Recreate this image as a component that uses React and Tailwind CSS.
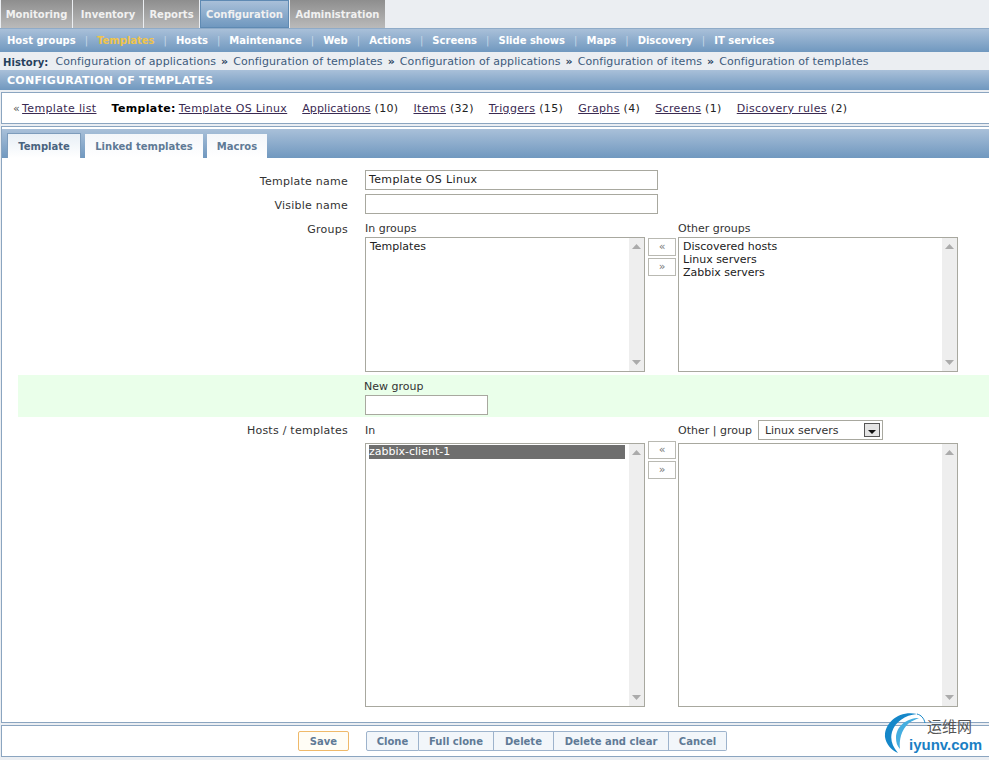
const mainTabs = [
  { label: "Monitoring", w: "w-[71px]" },
  { label: "Inventory", w: "w-[70px]" },
  { label: "Reports", w: "w-[55px]" },
  { label: "Configuration", w: "w-[89px]", active: true },
  { label: "Administration", w: "w-[95px]" },
]

const subLinks = ["Host groups", "Templates", "Hosts", "Maintenance", "Web", "Actions", "Screens", "Slide shows", "Maps", "Discovery", "IT services"]
const history = ["Configuration of applications", "Configuration of templates", "Configuration of applications", "Configuration of items", "Configuration of templates"]
const crumbs = [
  ["Applications", "(10)", "tracking-[0.1px]"],
  ["Items", "(32)", ""],
  ["Triggers", "(15)", ""],
  ["Graphs", "(4)", ""],
  ["Screens", "(1)", ""],
  ["Discovery rules", "(2)", ""],
]

const barGradient = "bg-gradient-to-b from-[#a9c0d9] to-[#7098bf]"

function Arrow({ down }) {
  return (
    <svg width="9" height="5" viewBox="0 0 9 5" className="block">
      <path d={down ? "M0 0h9L4.5 5z" : "M4.5 0L9 5H0z"} fill="#ababab" />
    </svg>
  )
}

function ListBox({ width, height, items = [], selected }) {
  return (
    <div className={`${width} ${height} border border-[#a8a89f] bg-white flex`}>
      <div className="flex-1 text-[11px] leading-[13px] text-[#222]">
        {items.length > 0 && (
          <div className="pl-[4px] pt-[2px]">
            {items.map((item) => (
              <div key={item}>{item}</div>
            ))}
          </div>
        )}
        {selected && <div className="mt-[1px] ml-[3px] mr-[4px] h-[14px] bg-[#6e6e6e] text-white">{selected}</div>}
      </div>
      <div className="w-[15px] bg-[#eeeeee] flex flex-col justify-between items-center py-[6px]">
        <Arrow />
        <Arrow down />
      </div>
    </div>
  )
}

function MoveButtons() {
  return (
    <div className="w-[28px] flex flex-col gap-[2px] text-[11px] text-[#777]">
      <div className="h-[18px] border border-[#b9b9b2] bg-white flex items-center justify-center">«</div>
      <div className="h-[18px] border border-[#b9b9b2] bg-white flex items-center justify-center">»</div>
    </div>
  )
}

function Row({ label, children, className = "" }) {
  return (
    <div className={`flex ${className}`}>
      <div className="w-[348px] shrink-0 text-right text-[11px] leading-[14px] tracking-[0.25px] text-[#333]">{label}</div>
      <div className="ml-[17px]">{children}</div>
    </div>
  )
}

function FootButton({ label, className = "" }) {
  return (
    <div className={`h-[20px] flex items-center justify-center bg-[#f2f6fa] border border-[#9db3cc] text-[10px] font-bold text-[#5f7a96] ${className}`}>
      {label}
    </div>
  )
}

function Logo() {
  return (
    <div className="absolute left-[884px] top-[710px] w-[105px] h-[50px]">
      <svg width="44" height="44" viewBox="0 0 44 44" className="absolute left-0 top-[2px]">
        <path d="M33 2C15-2 0 11 1 25c1 7 6 13 13 16C8 34 6 27 8 20 11 10 21 3 33 2z" fill="#1587c9" />
        <path d="M35 6C23 6 12 14 12 26c0 4 1 8 4 11-1-9 1-19 9-26 3-2 7-4 10-5z" fill="#45aee0" />
        <path d="M33 2c4 1 7 4 8 9" fill="none" stroke="#1587c9" strokeWidth="1" />
      </svg>
      <div className="absolute left-[43px] top-[7px] text-[15px] leading-[18px] text-[#555] font-['Noto_Sans_CJK_SC',sans-serif]">运维网</div>
      <div className="absolute left-[25px] top-[26px] text-[15px] leading-[18px] font-bold text-[#1a7fc4] font-['Liberation_Sans',sans-serif]">iyunv.com</div>
    </div>
  )
}

export default function App() {
  return (
    <div className="relative w-[989px] h-[760px] overflow-hidden bg-[#ebeef2] font-['DejaVu_Sans',sans-serif]">
      {/* Main menu */}
      <div className="h-[28px] pl-[1px] flex gap-[1px] items-stretch">
        {mainTabs.map((tab) => (
          <div
            key={tab.label}
            className={`${tab.w} pt-[1px] flex items-center justify-center text-[10px] font-bold text-[#f1f1f1] ${
              tab.active ? `${barGradient} border border-[#5f8ab3]` : "bg-gradient-to-b from-[#8e8e8e] to-[#bababa]"
            }`}
          >
            {tab.label}
          </div>
        ))}
      </div>

      {/* Sub menu */}
      <div className={`h-[24px] pl-[7px] flex items-center border-t border-[#8fabc8] text-[10px] font-bold text-white ${barGradient}`}>
        {subLinks.map((link, i) => (
          <div key={link} className="flex items-center">
            {i > 0 && <span className="mx-[9px] font-normal text-[#c5d6e6]">|</span>}
            <span className={link === "Templates" ? "text-[#f0c44a]" : ""}>{link}</span>
          </div>
        ))}
      </div>

      {/* History */}
      <div className="h-[18px] pl-[3px] pt-[2px] flex items-center text-[11px] tracking-[0.07px] text-[#3d5b7c] whitespace-nowrap">
        <span className="font-bold text-[10px] text-[#27405c] mr-[7px]">History:</span>
        {history.map((h, i) => (
          <span key={i}>
            {i > 0 && <span className="mx-[5px] text-[#27405c] font-bold">»</span>}
            {h}
          </span>
        ))}
      </div>

      {/* Title */}
      <div className={`h-[20px] pl-[7px] pt-[2px] flex items-center text-[11px] tracking-[0.3px] font-bold text-white ${barGradient}`}>
        CONFIGURATION OF TEMPLATES
      </div>

      {/* Breadcrumbs */}
      <div className="mt-[2px] ml-[1px] h-[32px] pl-[11px] pt-[2px] flex items-center bg-white border-y border-[#8ba5c0] border-l text-[11px] tracking-[0.35px] text-[#222] whitespace-nowrap">
        <span className="text-[#555] mr-[2px]">«</span>
        <span className="underline text-[#3a2a52] mr-[15px]">Template list</span>
        <span className="font-bold text-black mr-[3px]">Template:</span>
        <span className="underline text-[#3a2a52] mr-[15px]">Template OS Linux</span>
        {crumbs.map(([name, count, spacing]) => (
          <span key={name} className="mr-[15px]">
            <span className={`underline text-[#3a2a52] ${spacing}`}>{name}</span> {count}
          </span>
        ))}
      </div>

      {/* Form */}
      <div className="mt-[2px] ml-[1px] h-[597px] bg-white border border-r-0 border-[#8ba5c0] pt-[2px]">
        <div className={`h-[29px] pl-[5px] flex items-end gap-[4px] text-[10px] font-bold ${barGradient}`}>
          <div className="h-[25px] w-[74px] flex items-center justify-center bg-gradient-to-b from-[#e8eff6] to-white border-x border-t border-[#7d9cbc] text-[#4a6480]">Template</div>
          <div className="h-[24px] w-[118px] flex items-center justify-center bg-gradient-to-b from-[#f3f6fa] to-white text-[#5f7a96]">Linked templates</div>
          <div className="h-[24px] w-[60px] flex items-center justify-center bg-gradient-to-b from-[#f3f6fa] to-white text-[#5f7a96]">Macros</div>
        </div>

        <div className="pt-[12px] -ml-[2px]">
          <Row label={<div className="pt-[5px]">Template name</div>}>
            <div className="w-[293px] h-[20px] border border-[#a8a89f] pl-[3px] pt-[1px] flex items-center text-[11px] tracking-[0.35px] text-[#222]">Template OS Linux</div>
          </Row>
          <Row label={<div className="pt-[5px]">Visible name</div>} className="mt-[4px]">
            <div className="w-[293px] h-[20px] border border-[#a8a89f]" />
          </Row>
          <Row label={<div className="pt-[5px]">Groups</div>} className="mt-[4px]">
            <div className="flex">
              <div>
                <div className="h-[19px] pt-[4px] text-[11px] leading-[14px] text-[#333]">In groups</div>
                <ListBox width="w-[280px]" height="h-[135px]" items={["Templates"]} />
              </div>
              <div className="ml-[3px] mr-[2px] pt-[20px]"><MoveButtons /></div>
              <div>
                <div className="h-[19px] pt-[4px] text-[11px] leading-[14px] text-[#333]">Other groups</div>
                <ListBox width="w-[280px]" height="h-[135px]" items={["Discovered hosts", "Linux servers", "Zabbix servers"]} />
              </div>
            </div>
          </Row>

          <div className="mt-[3px] ml-[18px] h-[42px] bg-[#eaffea] pl-[346px] pt-[5px]">
            <div className="text-[11px] leading-[14px] text-[#333]">New group</div>
            <div className="mt-[1px] ml-[1px] w-[123px] h-[20px] border border-[#a8a89f] bg-white" />
          </div>

          <Row label={<div className="pt-[4px]">Hosts / templates</div>} className="mt-[3px]">
            <div className="flex">
              <div>
                <div className="h-[23px] pt-[4px] text-[11px] leading-[14px] text-[#333]">In</div>
                <ListBox width="w-[280px]" height="h-[264px]" selected="zabbix-client-1" />
              </div>
              <div className="ml-[3px] mr-[2px] pt-[21px]"><MoveButtons /></div>
              <div>
                <div className="h-[23px] flex items-start text-[11px] text-[#333]">
                  <span className="pt-[4px] leading-[14px]">Other | group</span>
                  <div className="ml-[6px] w-[125px] h-[20px] border border-[#a8a89f] pl-[6px] pr-[2px] flex items-center justify-between">
                    <span className="pt-[2px]">Linux servers</span>
                    <div className="w-[16px] h-[14px] border border-[#555] bg-[#e4e4e4] flex items-end justify-center pb-[2px]">
                      <svg width="8" height="4" viewBox="0 0 8 4" className="block"><path d="M0 0h8L4 4z" fill="#111" /></svg>
                    </div>
                  </div>
                </div>
                <ListBox width="w-[280px]" height="h-[264px]" />
              </div>
            </div>
          </Row>
        </div>
      </div>

      {/* Footer */}
      <div className="mt-[2px] ml-[1px] h-[32px] bg-white border-y border-l border-[#8ba5c0] flex items-center">
        <FootButton label="Save" className="ml-[296px] w-[51px] rounded-[2px] border-[#efb96a] bg-[#fffdf6]" />
        <div className="ml-[17px] flex">
          <FootButton label="Clone" className="w-[53px] rounded-l-[2px]" />
          <FootButton label="Full clone" className="w-[75px] border-l-0" />
          <FootButton label="Delete" className="w-[60px] border-l-0" />
          <FootButton label="Delete and clear" className="w-[115px] border-l-0" />
          <FootButton label="Cancel" className="w-[58px] border-l-0 rounded-r-[2px]" />
        </div>
      </div>

      <Logo />
    </div>
  )
}
